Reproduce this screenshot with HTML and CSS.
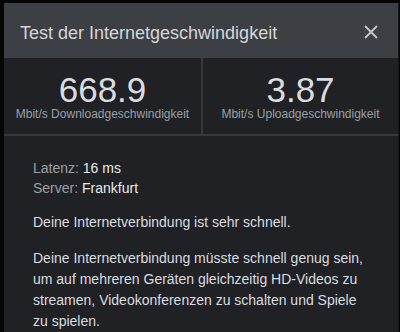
FILE: index.html
```html
<!DOCTYPE html>
<html lang="de">
<head>
<meta charset="utf-8">
<link rel="stylesheet" href="styles.css">
</head>
<body>
<div class="dialog">
  <div class="header">
    <span class="title">Test der Internetgeschwindigkeit</span>
    <svg class="close" width="14" height="14" viewBox="0 0 14 14"><path d="M1 1L13 13M13 1L1 13" stroke="#c4c7c9" stroke-width="1.8" fill="none"/></svg>
  </div>
  <div class="stats">
    <div class="stat">
      <div class="value">668.9</div>
      <div class="label">Mbit/s Downloadgeschwindigkeit</div>
    </div>
    <div class="stat">
      <div class="value">3.87</div>
      <div class="label">Mbit/s Uploadgeschwindigkeit</div>
    </div>
  </div>
  <div class="details">
    <div class="meta"><span class="key">Latenz:</span> 16 ms</div>
    <div class="meta"><span class="key">Server:</span> Frankfurt</div>
    <p class="text first">Deine Internetverbindung ist sehr schnell.</p>
    <p class="text">Deine Internetverbindung müsste schnell genug sein, um auf mehreren Geräten gleichzeitig HD-Videos zu streamen, Videokonferenzen zu schalten und Spiele zu spielen.</p>
  </div>
</div>
</body>
</html>
```
FILE: styles.css
```css
html, body {
  margin: 0;
  padding: 0;
  background: #050505;
  height: 100%;
  overflow: hidden;
}
body {
  font-family: "Liberation Sans", Arial, sans-serif;
  padding: 3px 0 0 4px;
}
.dialog {
  width: 394px;
  height: 329px;
  background: #202124;
  border-right: 1px solid #17181a;
}
.header {
  height: 55px;
  background: #3c3f43;
  display: flex;
  align-items: center;
  justify-content: space-between;
  padding: 0 20px 0 16px;
}
.title {
  font-size: 18px;
  color: #d4d6d8;
  padding-top: 6px;
}
.close {
  margin-top: 2px;
}
.stats {
  display: grid;
  grid-template-columns: 197px 1fr;
  height: 76px;
  border-bottom: 2px solid #36383c;
}
.stat {
  display: flex;
  flex-direction: column;
  align-items: center;
  padding-top: 12px;
}
.stat + .stat {
  border-left: 2px solid #36383c;
}
.value {
  font-size: 35px;
  line-height: 40px;
  color: #dadce0;
}
.label {
  font-size: 12px;
  line-height: 14px;
  color: #9aa0a6;
  margin-top: -3px;
}
.details {
  padding: 22px 30px 0 29px;
}
.meta {
  font-size: 14px;
  line-height: 20px;
  color: #e8eaed;
}
.key {
  color: #9aa0a6;
}
.text {
  font-size: 14px;
  line-height: 21px;
  color: #dadce0;
  margin: 15px 0 0 0;
}
.text.first {
  margin-top: 14px;
}
```
